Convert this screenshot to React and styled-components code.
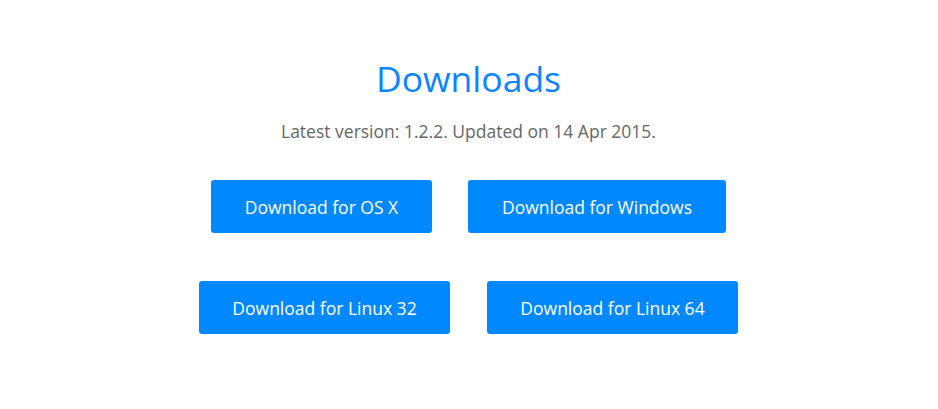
import React from "react";
import styled, { createGlobalStyle } from "styled-components";

const GlobalStyle = createGlobalStyle`
  body {
    margin: 0;
    background: #fff;
    font-family: "Open Sans", "Noto Sans", sans-serif;
  }
`;

const Section = styled.section`
  width: 937px;
  padding-top: 55px;
  text-align: center;
`;

const Title = styled.h1`
  margin: 0;
  font-size: 35.5px;
  font-weight: 400;
  line-height: 46px;
  color: #0a85ff;
`;

const Version = styled.p`
  margin: 18px 0 0;
  font-size: 17.5px;
  line-height: 24px;
  color: #666;
`;

const Row = styled.div`
  display: flex;
  justify-content: center;
  gap: ${(p) => p.$gap}px;
  margin-top: ${(p) => p.$top}px;
`;

const Button = styled.a`
  display: flex;
  align-items: center;
  justify-content: center;
  height: 53px;
  min-width: ${(p) => p.$width}px;
  box-sizing: border-box;
  padding: 0 30px;
  border-radius: 3px;
  background: #0088ff;
  color: #fff;
  font-size: 17.5px;
  text-decoration: none;
  cursor: pointer;
`;

export default function App() {
  return (
    <>
      <GlobalStyle />
      <Section>
        <Title>Downloads</Title>
        <Version>Latest version: 1.2.2. Updated on 14 Apr 2015.</Version>
        <Row $top={37} $gap={36}>
          <Button $width={221}>Download for OS X</Button>
          <Button $width={258}>Download for Windows</Button>
        </Row>
        <Row $top={48} $gap={37}>
          <Button $width={251}>Download for Linux 32</Button>
          <Button $width={251}>Download for Linux 64</Button>
        </Row>
      </Section>
    </>
  );
}
